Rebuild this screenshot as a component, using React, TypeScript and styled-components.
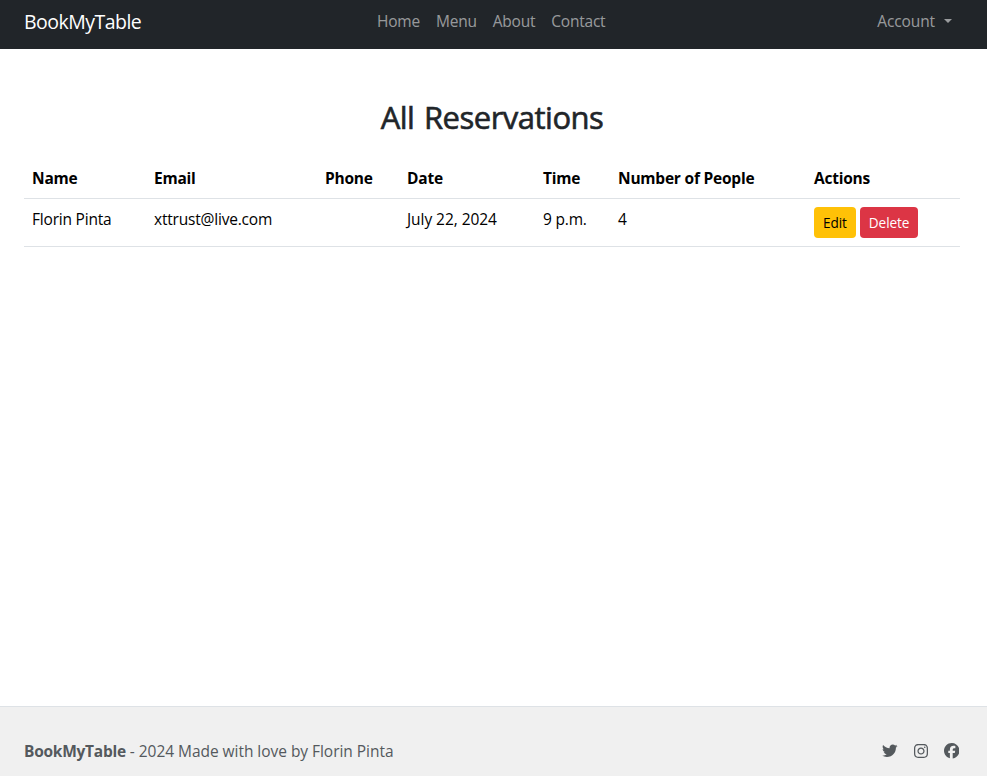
import React from 'react';
import styled, { createGlobalStyle } from 'styled-components';
import { FaTwitter, FaInstagram, FaFacebook } from 'react-icons/fa6';

const GlobalStyle = createGlobalStyle`
  *, *::before, *::after { box-sizing: border-box; }
  body {
    margin: 0;
    background: #fff;
    color: #212529;
    font-family: 'Open Sans', 'Noto Sans', sans-serif;
    font-size: 15.5px;
    line-height: 24px;
    overflow: hidden;
  }
`;

const Page = styled.div`
  display: flex;
  flex-direction: column;
  height: 776px;
`;

const Navbar = styled.nav`
  display: grid;
  grid-template-columns: 353px 1fr auto;
  height: 49px;
  padding: 0 35px 6px 24px;
  align-items: center;
  background: #212529;
`;

const Brand = styled.a`
  font-size: 19.5px;
  letter-spacing: -0.52px;
  color: #fff;
`;

const NavLinks = styled.div`
  display: flex;
  gap: 16px;
`;

const NavLink = styled.a`
  margin-top: -1px;
  color: rgba(255, 255, 255, 0.55);
  letter-spacing: -0.22px;
`;

const Account = styled(NavLink)`
  display: flex;
  align-items: center;
  letter-spacing: -0.1px;
  &::after {
    content: '';
    margin-left: 9px;
    border: 4.8px solid transparent;
    border-top-color: currentColor;
    border-bottom: 0;
  }
`;

const Main = styled.main`
  flex: 1;
  padding: 49px 27px 0 24px;
`;

const Title = styled.h2`
  margin: 0 0 22px;
  font-size: 31px;
  line-height: 38px;
  font-weight: 500;
  letter-spacing: -0.5px;
  word-spacing: 2px;
  -webkit-text-stroke: 0.6px currentColor;
  text-align: center;
`;

const Table = styled.table`
  width: 100%;
  table-layout: fixed;
  border-collapse: collapse;
  color: #000;
`;

const Cell = styled.td`
  padding: 8px;
  text-align: left;
  vertical-align: top;
  white-space: nowrap;
  border-bottom: 1px solid #dee2e6;
  letter-spacing: -0.2px;
`;

const DateCell = styled(Cell)`
  letter-spacing: -0.05px;
`;

const HeadCell = styled(Cell)`
  font-weight: 700;
  letter-spacing: -0.22px;
`;

const Actions = styled.div`
  display: flex;
  gap: 4px;
`;

const Button = styled.button<{ $danger?: boolean }>`
  height: 31px;
  padding: 0 9px;
  border: 0;
  border-radius: 4px;
  font: 13.6px/21px 'Open Sans', sans-serif;
  letter-spacing: -0.08px;
  color: ${(p) => (p.$danger ? '#fff' : '#000')};
  background: ${(p) => (p.$danger ? '#dc3545' : '#ffc107')};
`;

const Footer = styled.footer`
  display: flex;
  justify-content: space-between;
  height: 70px;
  padding: 32px 27px 0 24px;
  border-top: 1px solid #dee2e6;
  background: #f0f0f0;
  color: #54595d;
`;

const Credit = styled.span`
  letter-spacing: -0.04px;
`;

const SiteName = styled.b`
  letter-spacing: -0.26px;
`;

const Social = styled.div`
  display: flex;
  gap: 16px;
  align-items: center;
  height: 24px;
  margin-right: 1px;
  font-size: 15.5px;
`;

const InstagramIcon = styled(FaInstagram)`
  width: 14px;
  height: 16px;
`;

const columns: [string, number][] = [
  ['Name', 122], ['Email', 171], ['Phone', 82], ['Date', 136],
  ['Time', 75], ['Number of People', 196], ['Actions', 154],
];

export default function App() {
  return (
    <Page>
      <GlobalStyle />
      <Navbar>
        <Brand>BookMyTable</Brand>
        <NavLinks>
          <NavLink>Home</NavLink>
          <NavLink>Menu</NavLink>
          <NavLink>About</NavLink>
          <NavLink>Contact</NavLink>
        </NavLinks>
        <Account>Account</Account>
      </Navbar>
      <Main>
        <Title>All Reservations</Title>
        <Table>
          <colgroup>{columns.map(([n, w]) => <col key={n} width={w} />)}</colgroup>
          <thead>
            <tr>{columns.map(([n]) => <HeadCell as="th" key={n}>{n}</HeadCell>)}</tr>
          </thead>
          <tbody>
            <tr>
              <Cell>Florin Pinta</Cell>
              <Cell>xttrust@live.com</Cell>
              <Cell />
              <DateCell>July 22, 2024</DateCell>
              <Cell>9 p.m.</Cell>
              <Cell>4</Cell>
              <Cell>
                <Actions>
                  <Button>Edit</Button>
                  <Button $danger>Delete</Button>
                </Actions>
              </Cell>
            </tr>
          </tbody>
        </Table>
      </Main>
      <Footer>
        <Credit><SiteName>BookMyTable</SiteName> - 2024 Made with love by Florin Pinta</Credit>
        <Social><FaTwitter /><InstagramIcon /><FaFacebook /></Social>
      </Footer>
    </Page>
  );
}
